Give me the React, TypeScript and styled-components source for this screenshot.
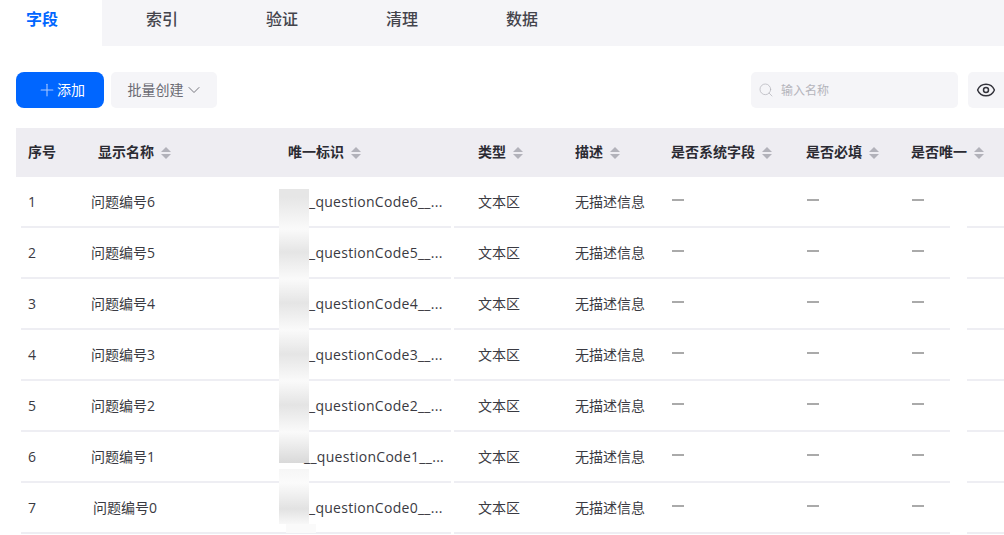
import React from "react";
import styled, { createGlobalStyle } from "styled-components";
import { ChevronDown, Eye, Plus, Search } from "lucide-react";

const Global = createGlobalStyle`
  html, body { margin: 0; padding: 0; background: #fff; overflow: hidden; }
  body { font-family: "Open Sans", "Noto Sans CJK SC", "Liberation Sans", sans-serif; color: #33333b; }
`;

const COLS = "70px 190px 190px 97px 96px 135px 105px 105px";

const Page = styled.div`width: 1004px; height: 535px; overflow: hidden;`;

const TabBar = styled.div`display: flex; height: 46px; background: #f5f5f8;`;
const Tab = styled.div<{ $active?: boolean }>`
  width: ${p => (p.$active ? 102 : 120)}px;
  height: 46px; box-sizing: border-box;
  padding: 0 ${p => (p.$active ? 18 : 0)}px 10px 0;
  display: flex; align-items: center; justify-content: center;
  font-size: 16px; font-weight: ${p => (p.$active ? 700 : 500)};
  color: ${p => (p.$active ? "#0066ff" : "#44444c")};
  background: ${p => (p.$active ? "#fff" : "transparent")};
`;

const Toolbar = styled.div`display: flex; align-items: center; height: 36px; margin: 26px 0 20px 16px; gap: 7px;`;
const PrimaryButton = styled.button`
  width: 88px; height: 36px; border: 0; border-radius: 8px; background: #0066ff; color: #fff;
  font: inherit; font-size: 14px; display: flex; align-items: center; justify-content: center; gap: 0; padding: 0 0 2px 2px;
  svg { color: #a9c8ff; margin-top: 2px; }
`;
const SecondaryButton = styled.button`
  width: 106px; height: 36px; border: 0; border-radius: 5px; background: #f5f5f8; color: #6b6b73;
  font: inherit; font-size: 14px; display: flex; align-items: center; justify-content: center; gap: 0; padding: 0 0 2px 3px;
  svg { margin-top: 2px; }
`;
const SearchBox = styled.div`
  width: 207px; height: 36px; margin-left: auto; margin-right: 3px; border-radius: 5px; background: #f5f5f8;
  display: flex; align-items: center; gap: 7px; padding-left: 7px; box-sizing: border-box;
  color: #b4b4bb; font-size: 12px;
`;
const IconButton = styled.button`
  width: 36px; height: 36px; border: 0; border-radius: 5px 0 0 5px; background: #f5f5f8; color: #33333b;
  display: flex; align-items: center; justify-content: center; padding: 0;
`;

const Table = styled.div`margin-left: 16px; width: 988px;`;
const HeadRow = styled.div`display: grid; grid-template-columns: ${COLS}; height: 49px; background: #eeedf2;`;
const HeadCell = styled.div`
  display: flex; align-items: center; gap: 7px; padding: 0 0 3px 12px;
  font-size: 14px; font-weight: 700; color: #2b2b33; white-space: nowrap;
  svg { margin-top: 3px; }
`;
const Body = styled.div`position: relative;`;
const Row = styled.div`
  display: grid; grid-template-columns: ${COLS}; height: 51px; align-items: center;
  font-size: 14px; color: #3a3a42;
  background: linear-gradient(to right,
    transparent 5px, #eeeef3 5px, #eeeef3 435px, transparent 435px, transparent 438px,
    #eeeef3 438px, #eeeef3 934px, transparent 934px, transparent 951px, #eeeef3 951px)
    bottom / 100% 2px no-repeat;
`;
const Cell = styled.div<{ $indent?: number; $wide?: boolean; $latin?: boolean }>`
  padding: 0 0 ${p => (p.$latin ? 3 : 4)}px ${p => p.$indent ?? 12}px; white-space: nowrap; overflow: hidden;
  letter-spacing: ${p => (p.$wide ? "0.28px" : "0")};
`;
const Dash = styled.span`display: block; width: 12px; height: 2px; margin: 0 0 1px 1px; background: #aaaaaa;`;

const SmudgeMain = styled.div`
  position: absolute; left: 263px; top: 12px; width: 30px; height: 274px;
  background: linear-gradient(to bottom,
    #e6e6e6 0, #e6e6e6 8px, #fafafa 40px, #e5e5e5 63px, #fafafa 90px, #e5e5e5 114px, #fafafa 141px,
    #e5e5e5 165px, #fafafa 192px, #e4e4e4 216px, #fafafa 243px, #d9d9d9 274px);
`;
const SmudgeLow = styled.div`
  position: absolute; left: 263px; top: 292px; width: 30px; height: 55px;
  background: linear-gradient(to bottom, #f6f6f6 0, #fbfbfb 14px, #e2e2e2 40px, #f8f8f8 55px);
`;
const SmudgeFoot = styled.div`
  position: absolute; left: 270px; top: 347px; width: 30px; height: 9px; background: #fafafa;
`;

const SortIcon = () => (
  <svg width="10" height="14" viewBox="0 0 10 14" fill="#b2b2ba">
    <path d="M5 1 L10 6 H0 Z" />
    <path d="M0 8 H10 L5 13 Z" />
  </svg>
);

const heads = ["序号", "显示名称", "唯一标识", "类型", "描述", "是否系统字段", "是否必填", "是否唯一"];
const rows = [
  { name: "问题编号6", id: "_questionCode6__...", nameIndent: 5, idIndent: 33 },
  { name: "问题编号5", id: "_questionCode5__...", nameIndent: 5, idIndent: 33 },
  { name: "问题编号4", id: "_questionCode4__...", nameIndent: 5, idIndent: 33 },
  { name: "问题编号3", id: "_questionCode3__...", nameIndent: 5, idIndent: 33 },
  { name: "问题编号2", id: "_questionCode2__...", nameIndent: 5, idIndent: 33 },
  { name: "问题编号1", id: "__questionCode1__...", nameIndent: 5, idIndent: 28 },
  { name: "问题编号0", id: "_questionCode0__...", nameIndent: 7, idIndent: 33 },
];

export default function App() {
  return (
    <Page>
      <Global />
      <TabBar>
        <Tab $active>字段</Tab>
        <Tab>索引</Tab>
        <Tab>验证</Tab>
        <Tab>清理</Tab>
        <Tab>数据</Tab>
      </TabBar>
      <Toolbar>
        <PrimaryButton><Plus size={20} strokeWidth={1.3} />添加</PrimaryButton>
        <SecondaryButton>批量创建<ChevronDown size={20} strokeWidth={1.1} /></SecondaryButton>
        <SearchBox><Search size={16} strokeWidth={1.1} />输入名称</SearchBox>
        <IconButton><Eye size={20} strokeWidth={1.8} /></IconButton>
      </Toolbar>
      <Table>
        <HeadRow>
          {heads.map((h, i) => (
            <HeadCell key={h}>{h}{i > 0 && <SortIcon />}</HeadCell>
          ))}
        </HeadRow>
        <Body>
          {rows.map((r, i) => (
            <Row key={r.name}>
              <Cell $latin>{i + 1}</Cell>
              <Cell $indent={r.nameIndent}>{r.name}</Cell>
              <Cell $indent={r.idIndent} $wide $latin>{r.id}</Cell>
              <Cell>文本区</Cell>
              <Cell>无描述信息</Cell>
              <Cell><Dash /></Cell>
              <Cell><Dash /></Cell>
              <Cell><Dash /></Cell>
            </Row>
          ))}
          <SmudgeMain />
          <SmudgeLow />
          <SmudgeFoot />
        </Body>
      </Table>
    </Page>
  );
}
